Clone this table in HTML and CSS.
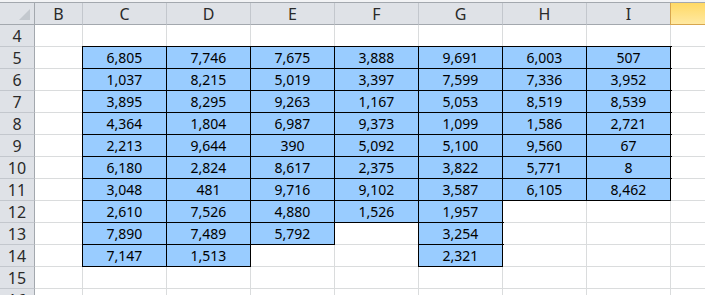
FILE: index.html
```html
<!DOCTYPE html>
<html>
<head>
<meta charset="utf-8">
<link rel="stylesheet" href="styles.css">
</head>
<body>
<div class="strip"></div>
<div class="sheet">
  <div class="corner"><svg class="tri" width="11" height="11" viewBox="0 0 11 11"><polygon points="11,0 11,11 0,11" fill="#c3c8ce"/></svg></div>
  <div class="ch">B</div><div class="ch">C</div><div class="ch">D</div><div class="ch">E</div><div class="ch">F</div><div class="ch">G</div><div class="ch">H</div><div class="ch">I</div><div class="ch sel">J</div>

  <div class="rh">4</div><div class="c"></div><div class="c"></div><div class="c"></div><div class="c"></div><div class="c"></div><div class="c"></div><div class="c"></div><div class="c"></div><div class="c"></div>

  <div class="rh">5</div><div class="c"></div><div class="c b">6,805</div><div class="c b">7,746</div><div class="c b">7,675</div><div class="c b">3,888</div><div class="c b">9,691</div><div class="c b">6,003</div><div class="c b">507</div><div class="c"></div>

  <div class="rh">6</div><div class="c"></div><div class="c b">1,037</div><div class="c b">8,215</div><div class="c b">5,019</div><div class="c b">3,397</div><div class="c b">7,599</div><div class="c b">7,336</div><div class="c b">3,952</div><div class="c"></div>

  <div class="rh">7</div><div class="c"></div><div class="c b">3,895</div><div class="c b">8,295</div><div class="c b">9,263</div><div class="c b">1,167</div><div class="c b">5,053</div><div class="c b">8,519</div><div class="c b">8,539</div><div class="c"></div>

  <div class="rh">8</div><div class="c"></div><div class="c b">4,364</div><div class="c b">1,804</div><div class="c b">6,987</div><div class="c b">9,373</div><div class="c b">1,099</div><div class="c b">1,586</div><div class="c b">2,721</div><div class="c"></div>

  <div class="rh">9</div><div class="c"></div><div class="c b">2,213</div><div class="c b">9,644</div><div class="c b">390</div><div class="c b">5,092</div><div class="c b">5,100</div><div class="c b">9,560</div><div class="c b">67</div><div class="c"></div>

  <div class="rh">10</div><div class="c"></div><div class="c b">6,180</div><div class="c b">2,824</div><div class="c b">8,617</div><div class="c b">2,375</div><div class="c b">3,822</div><div class="c b">5,771</div><div class="c b">8</div><div class="c"></div>

  <div class="rh">11</div><div class="c"></div><div class="c b">3,048</div><div class="c b">481</div><div class="c b">9,716</div><div class="c b">9,102</div><div class="c b">3,587</div><div class="c b">6,105</div><div class="c b">8,462</div><div class="c"></div>

  <div class="rh">12</div><div class="c"></div><div class="c b">2,610</div><div class="c b">7,526</div><div class="c b">4,880</div><div class="c b">1,526</div><div class="c b">1,957</div><div class="c"></div><div class="c"></div><div class="c"></div>

  <div class="rh">13</div><div class="c"></div><div class="c b">7,890</div><div class="c b">7,489</div><div class="c b">5,792</div><div class="c"></div><div class="c b">3,254</div><div class="c"></div><div class="c"></div><div class="c"></div>

  <div class="rh">14</div><div class="c"></div><div class="c b">7,147</div><div class="c b">1,513</div><div class="c"></div><div class="c"></div><div class="c b">2,321</div><div class="c"></div><div class="c"></div><div class="c"></div>

  <div class="rh">15</div><div class="c"></div><div class="c"></div><div class="c"></div><div class="c"></div><div class="c"></div><div class="c"></div><div class="c"></div><div class="c"></div><div class="c"></div>

  <div class="rh">16</div><div class="c"></div><div class="c"></div><div class="c"></div><div class="c"></div><div class="c"></div><div class="c"></div><div class="c"></div><div class="c"></div><div class="c"></div>
</div>
</body>
</html>
```

FILE: styles.css
```css
html, body {
  margin: 0;
  padding: 0;
  background: #ffffff;
  overflow: hidden;
  width: 705px;
  height: 295px;
}

.strip {
  height: 2px;
  background: #f2f3f5;
  border-bottom: 1px solid #a3a8ae;
}

.sheet {
  display: grid;
  grid-template-columns: 35px 48px repeat(7, 84px) 84px;
  grid-auto-rows: 22px;
  width: max-content;
  font-family: "Noto Sans", "Open Sans", sans-serif;
}

.sheet > div {
  box-sizing: border-box;
  display: flex;
  align-items: center;
  justify-content: center;
}

.corner {
  position: relative;
  background: #dfe2e7;
  border-right: 1px solid #a3a8ae;
  border-bottom: 1px solid #a3a8ae;
}

.tri {
  position: absolute;
  right: 4px;
  bottom: 4px;
}

.ch {
  background: #dfe2e7;
  border-right: 1px solid #c3c7cd;
  border-bottom: 1px solid #a3a8ae;
  font-size: 16px;
  color: #2a2a2a;
}

.ch.sel {
  background: linear-gradient(#ffd965, #ffe9a2);
  border-bottom: 1px solid #d7a64e;
  box-shadow: -1px 0 0 #d7a64e;
}

.rh {
  background: #dfe2e7;
  border-right: 1px solid #a3a8ae;
  border-bottom: 1px solid #c3c7cd;
  font-size: 16px;
  color: #2a2a2a;
}

.c {
  background: #ffffff;
  border-right: 1px solid #dadcdd;
  border-bottom: 1px solid #dadcdd;
  font-size: 14px;
  color: #000000;
}

.c.b {
  background: #99ccff;
  border-right: 1px solid #000000;
  border-bottom: 1px solid #000000;
  box-shadow: 0 0 0 1px #000000;
}
```
